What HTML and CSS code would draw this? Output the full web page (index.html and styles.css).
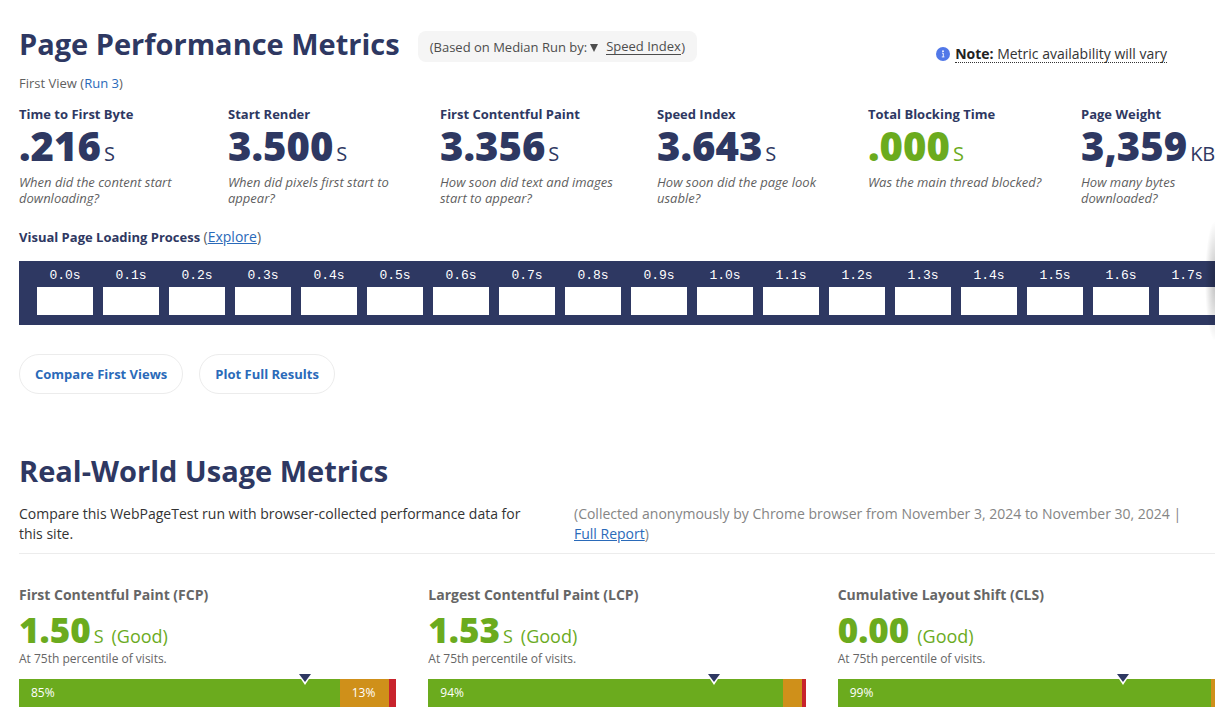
FILE: index.html
```html
<!DOCTYPE html>
<html lang="en">
<head>
<meta charset="utf-8">
<title>Page Performance Metrics</title>
<link rel="stylesheet" href="styles.css">
</head>
<body>
<main class="page">
  <section class="performance">
    <header class="perf-header">
      <h1 class="title">Page Performance Metrics</h1>
      <div class="run-picker">
        <label for="median">(Based on Median Run by:</label>
        <svg class="caret" viewBox="0 0 8 8" aria-hidden="true"><path d="M0 0h8L4 8z"/></svg>
        <select id="median" class="run-select"><option>Speed Index</option></select>
        <span>)</span>
      </div>
      <div class="note">
        <svg class="info" viewBox="0 0 14 14" aria-hidden="true"><circle cx="7" cy="7" r="7" fill="#5178e8"/><circle cx="7" cy="4.2" r=".9" fill="#fff"/><path d="M6 6.2h1.3v3.6M5.8 9.9h2.6" fill="none" stroke="#fff" stroke-width=".9"/></svg>
        <button type="button" class="note-button"><strong>Note:</strong> Metric availability will vary</button>
      </div>
    </header>
    <p class="view">First View (<a href="#run3">Run 3</a>)</p>
    <div class="metrics">
      <div class="metric"><h2 class="label">Time to First Byte</h2><p class="value">.216<span class="unit">S</span></p><p class="desc">When did the content start downloading?</p></div>
      <div class="metric"><h2 class="label">Start Render</h2><p class="value">3.500<span class="unit">S</span></p><p class="desc">When did pixels first start to appear?</p></div>
      <div class="metric"><h2 class="label">First Contentful Paint</h2><p class="value">3.356<span class="unit">S</span></p><p class="desc">How soon did text and images start to appear?</p></div>
      <div class="metric"><h2 class="label">Speed Index</h2><p class="value">3.643<span class="unit">S</span></p><p class="desc">How soon did the page look usable?</p></div>
      <div class="metric"><h2 class="label">Total Blocking Time</h2><p class="value good">.000<span class="unit">S</span></p><p class="desc">Was the main thread blocked?</p></div>
      <div class="metric"><h2 class="label">Page Weight</h2><p class="value">3,359<span class="unit">KB</span></p><p class="desc">How many bytes downloaded?</p></div>
    </div>
    <h2 class="label strip-title">Visual Page Loading Process <span class="explore">(<a class="underlined" href="#explore">Explore</a>)</span></h2>
    <div class="strip-wrap">
      <ol class="strip">
        <li class="frame">0.0s</li><li class="frame">0.1s</li><li class="frame">0.2s</li><li class="frame">0.3s</li><li class="frame">0.4s</li><li class="frame">0.5s</li><li class="frame">0.6s</li><li class="frame">0.7s</li><li class="frame">0.8s</li><li class="frame">0.9s</li><li class="frame">1.0s</li><li class="frame">1.1s</li><li class="frame">1.2s</li><li class="frame">1.3s</li><li class="frame">1.4s</li><li class="frame">1.5s</li><li class="frame">1.6s</li><li class="frame">1.7s</li>
      </ol>
    </div>
    <div class="actions">
      <a class="pill" href="#compare">Compare First Views</a>
      <a class="pill" href="#plot">Plot Full Results</a>
    </div>
  </section>
  <section class="usage">
    <h2 class="title">Real-World Usage Metrics</h2>
    <div class="intro">
      <p class="lead">Compare this WebPageTest run with browser-collected performance data for this site.</p>
      <p class="source">(Collected anonymously by Chrome browser from November 3, 2024 to November 30, 2024 | <a class="underlined report" href="#report">Full Report</a>)</p>
    </div>
    <div class="vitals">
      <div>
        <h3 class="vital-name">First Contentful Paint (FCP)</h3>
        <p class="vital-value">1.50<span class="vital-unit">S</span><span class="rating">(Good)</span></p>
        <p class="percentile">At 75th percentile of visits.</p>
        <div class="bar">
          <span class="seg fast" style="width:85%">85%</span><span class="seg medium" style="width:13%">13%</span><span class="seg slow" style="width:2%"></span>
          <svg class="marker" viewBox="0 0 16 12" aria-hidden="true"><path d="M0 0h16L8 12z" fill="#fff"/><path d="M2 1h12L8 9z" fill="#2e3862"/></svg>
        </div>
      </div>
      <div>
        <h3 class="vital-name">Largest Contentful Paint (LCP)</h3>
        <p class="vital-value">1.53<span class="vital-unit">S</span><span class="rating">(Good)</span></p>
        <p class="percentile">At 75th percentile of visits.</p>
        <div class="bar">
          <span class="seg fast" style="width:94%">94%</span><span class="seg medium" style="width:5%"></span><span class="seg slow" style="width:1%"></span>
          <svg class="marker" viewBox="0 0 16 12" aria-hidden="true"><path d="M0 0h16L8 12z" fill="#fff"/><path d="M2 1h12L8 9z" fill="#2e3862"/></svg>
        </div>
      </div>
      <div>
        <h3 class="vital-name">Cumulative Layout Shift (CLS)</h3>
        <p class="vital-value">0.00<span class="rating">(Good)</span></p>
        <p class="percentile">At 75th percentile of visits.</p>
        <div class="bar">
          <span class="seg fast" style="width:99%">99%</span><span class="seg medium" style="width:1%"></span>
          <svg class="marker" viewBox="0 0 16 12" aria-hidden="true"><path d="M0 0h16L8 12z" fill="#fff"/><path d="M2 1h12L8 9z" fill="#2e3862"/></svg>
        </div>
      </div>
    </div>
  </section>
</main>
</body>
</html>
```
FILE: styles.css
```css
* { box-sizing: border-box; }
body { margin: 0; background: #fff; color: #333; font-family: "Open Sans", "Noto Sans", sans-serif; }
h1, h2, h3, p, ol { margin: 0; padding: 0; }
a { color: #2a6ab9; text-decoration: none; }
.underlined { text-decoration: underline; }
.page { padding: 23px 12px 0 19px; }
.title { color: #2e3862; font-size: 29px; line-height: 42px; font-weight: 700; white-space: nowrap; }

.perf-header { display: flex; align-items: flex-start; }
.run-picker { display: flex; align-items: center; margin: 8px 0 0 18px; padding: 0 12px; height: 31px; border-radius: 8px; background: #f5f5f5; color: #4d4d4d; font-size: 13px; line-height: 16px; white-space: nowrap; }
.caret { width: 8px; height: 8px; margin: 2px 8px 0 3px; fill: #4d4d4d; }
.run-select { appearance: none; margin: 0; padding: 0; border: 0; border-bottom: 1px solid #4d4d4d; border-radius: 0; background: none; color: inherit; font: inherit; }
.note { display: flex; align-items: center; margin: 22px 48px 0 auto; gap: 5px; }
.info { width: 14px; height: 14px; }
.note-button { padding: 0; border: 0; border-bottom: 1px dotted #333; background: none; color: #333; font: inherit; font-size: 14px; line-height: 17px; white-space: nowrap; }
.note-button strong { color: #222; }

.view { margin-top: 9px; color: #5f5f5f; font-size: 13px; line-height: 18px; }
.metrics { display: grid; grid-template-columns: 209fr 212fr 217fr 211fr 213fr 134fr; margin-top: 12px; }
.metric { min-width: 0; }
.label { color: #2e3862; font-size: 13px; line-height: 20px; font-weight: 700; }
.value { color: #2e3862; font-size: 40px; line-height: 44px; font-weight: 800; white-space: nowrap; }
.unit { margin-left: 3px; font-size: 20px; line-height: 1; font-weight: 400; }
.good { color: #6bab1e; }
.desc { max-width: 180px; margin-top: 6px; color: #5f5f5f; font-size: 13px; line-height: 16px; font-style: italic; }

.strip-title { margin-top: 21px; }
.explore { color: #5f5f5f; font-size: 14px; line-height: 1; font-weight: 400; }
.strip-wrap { position: relative; margin-top: 14px; }
.strip-wrap::after { content: ""; position: absolute; top: -40px; right: 0; width: 10px; height: 120px; background: radial-gradient(farthest-side at 100% 50%, rgba(0, 0, 0, .25), transparent); }
.strip { display: flex; gap: 10px; padding: 6px 0 10px 18px; overflow: hidden; background: #2e3862; list-style: none; }
.frame { flex: none; width: 56px; color: #fff; font-family: "Liberation Mono", monospace; font-size: 13px; line-height: 17px; text-align: center; }
.frame::after { content: ""; display: block; height: 28px; margin-top: 3px; background: #fff; }
.actions { display: flex; gap: 16px; margin-top: 29px; }
.pill { padding: 0 15px; border: 1px solid #ececec; border-radius: 20px; font-size: 13px; line-height: 38px; font-weight: 700; }

.usage { margin-top: 56px; }
.intro { display: grid; grid-template-columns: 555fr 641fr; margin-top: 12px; padding-bottom: 9px; border-bottom: 1px solid #ececec; font-size: 14px; line-height: 20px; }
.lead { padding-right: 32px; }
.source { color: #858585; }
.report { white-space: nowrap; }
.vitals { display: grid; grid-template-columns: repeat(3, 1fr); gap: 32px; margin-top: 31px; }
.vital-name { color: #666; font-size: 14px; line-height: 20px; font-weight: 700; }
.vital-value { margin-top: 4px; color: #6bab1e; font-size: 35px; line-height: 42px; font-weight: 800; white-space: nowrap; }
.vital-unit { margin-left: 3px; font-size: 18px; line-height: 1; font-weight: 400; }
.rating { margin-left: 8px; font-size: 18px; line-height: 1; font-weight: 400; }
.percentile { color: #666; font-size: 12px; line-height: 16px; }
.bar { position: relative; display: flex; height: 28px; margin-top: 12px; color: #fff; font-size: 12px; line-height: 27px; }
.seg { padding-left: 12px; }
.seg:empty { padding: 0; }
.fast { background: #6bab1e; }
.medium { background: #cf901a; }
.slow { background: #c8232c; }
.marker { position: absolute; top: -6px; left: 76%; width: 16px; height: 12px; margin-left: -9px; }
```
